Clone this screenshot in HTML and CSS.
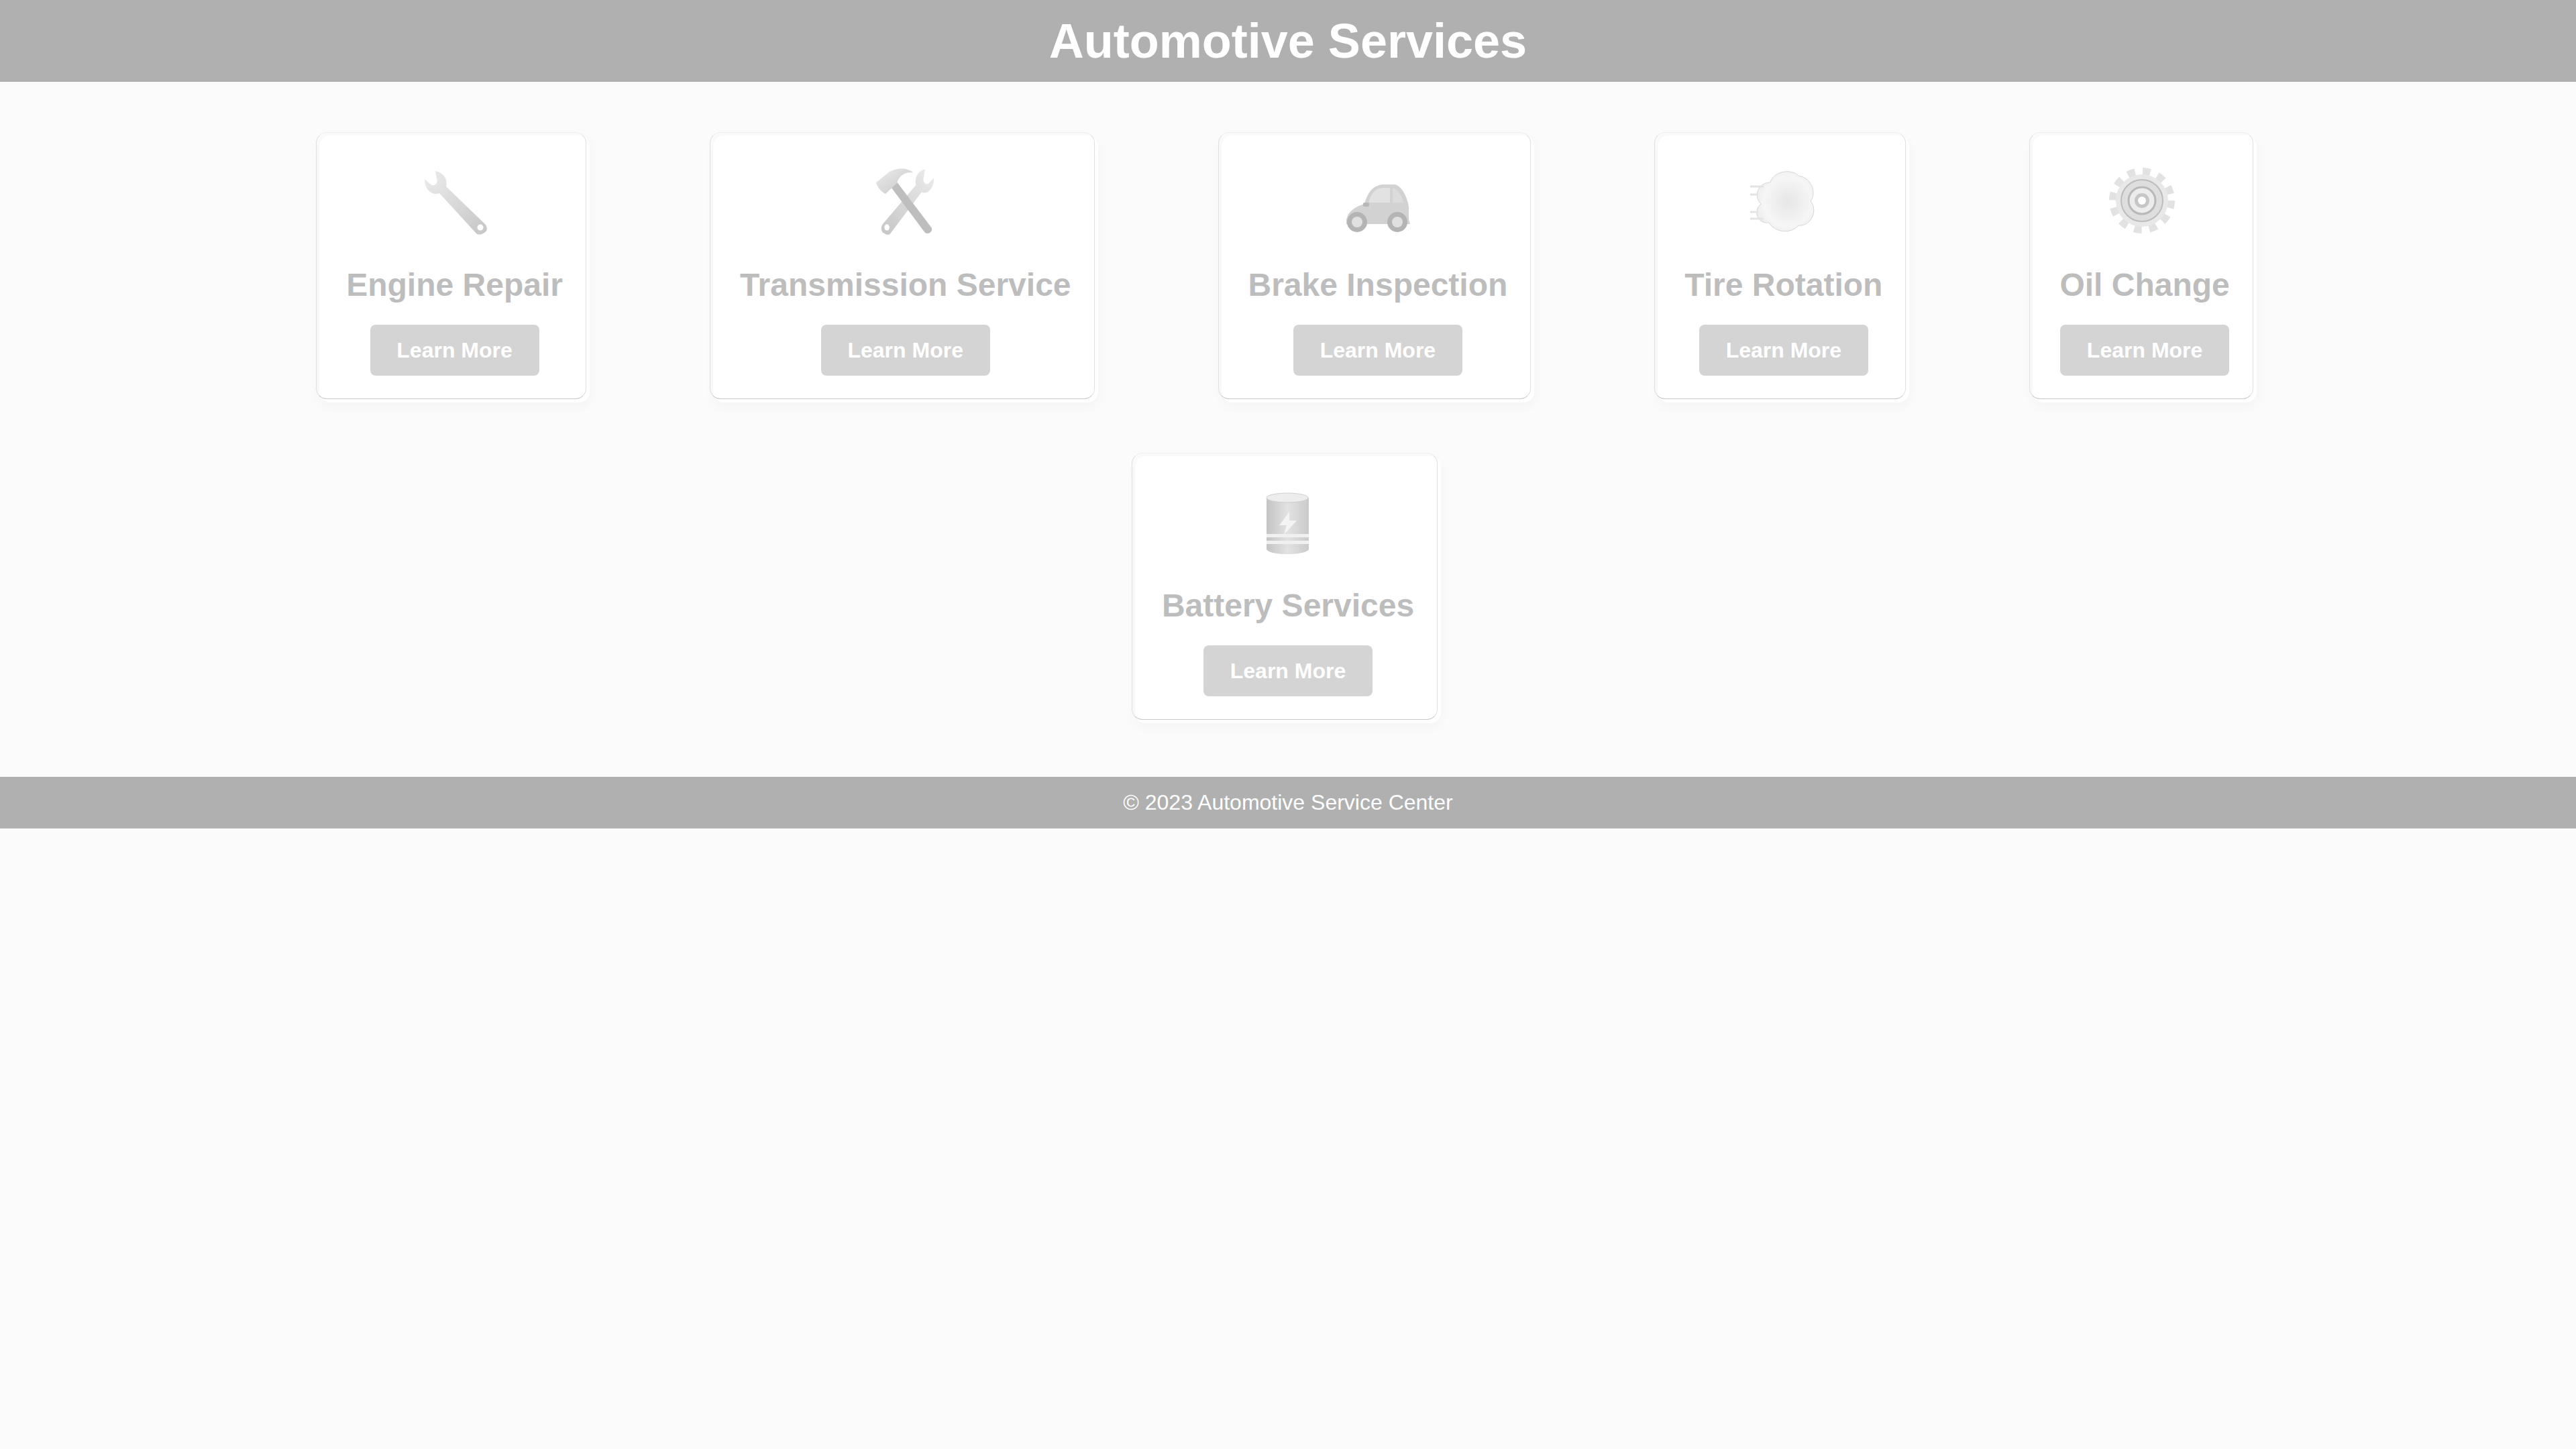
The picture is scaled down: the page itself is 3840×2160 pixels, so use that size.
FILE: index.html
```html
<html>
   <head>
      <title>Automotive Services</title>
      <link rel="stylesheet" href="styles.css">
   </head>
   <body>
      <svg class="defs" width="0" height="0">
         <defs>
            <linearGradient id="steel" x1="0" y1="0" x2="1" y2="1">
               <stop offset="0" stop-color="#ececec"/>
               <stop offset="1" stop-color="#c6c6c6"/>
            </linearGradient>
            <linearGradient id="can" x1="0" y1="0" x2="1" y2="0">
               <stop offset="0" stop-color="#c4c4c4"/>
               <stop offset="0.5" stop-color="#e2e2e2"/>
               <stop offset="1" stop-color="#cacaca"/>
            </linearGradient>
            <radialGradient id="puff" cx="0.55" cy="0.5" r="0.6">
               <stop offset="0" stop-color="#e6e6e6"/>
               <stop offset="0.7" stop-color="#f6f6f6"/>
               <stop offset="1" stop-color="#ececec"/>
            </radialGradient>
            <path id="spanner" d="M31 13C42 15 50 24 47 36L105 92C110 98 108 104 102 106C98 108 94 108 92 106L37 46C27 50 15 42 15 25L24 33C30 37 36 30 33 24Z"/>
         </defs>
      </svg>
      <header class="top">Automotive Services</header>
      <div class="services">
         <div class="card">
            <svg class="icon" viewBox="0 0 120 120">
               <use href="#spanner" fill="url(#steel)"/>
               <circle cx="98" cy="97" r="4.5" fill="#fff"/>
            </svg>
            <h2>Engine Repair</h2>
            <button>Learn More</button>
         </div>
         <div class="card">
            <svg class="icon" viewBox="0 0 120 120">
               <g transform="translate(115,-3) scale(-0.846,1.03)">
                  <use href="#spanner" fill="url(#steel)"/>
                  <circle cx="98" cy="97" r="4.5" fill="#fff"/>
               </g>
               <path d="M36 34L46 28L99 98C100 104 94 108 89 105Z" fill="#bebebe"/>
               <path d="M16 30L36 14C50 7 62 8 71 15C58 14 50 20 47 31L30 47C24 44 18 38 16 30Z" fill="url(#steel)"/>
            </svg>
            <h2>Transmission Service</h2>
            <button>Learn More</button>
         </div>
         <div class="card">
            <svg class="icon" viewBox="0 0 120 120">
               <path d="M13 92C12 78 20 68 40 62C44 46 52 35 66 33L86 33C96 36 104 52 106 66L106 85L108 92Z" fill="#d2d2d2"/>
               <path d="M46 60C50 46 56 39 66 38L78 38L78 60Z" fill="#e2e2e2"/>
               <path d="M82 38C90 40 96 50 98 60L82 60Z" fill="#dcdcdc"/>
               <rect x="38" y="60" width="9" height="6" rx="2" fill="#b8b8b8"/>
               <circle cx="29" cy="89" r="15" fill="#b4b4b4"/>
               <circle cx="29" cy="89" r="8" fill="#e0e0e0"/>
               <circle cx="89" cy="89" r="15" fill="#b4b4b4"/>
               <circle cx="89" cy="89" r="8" fill="#e0e0e0"/>
            </svg>
            <h2>Brake Inspection</h2>
            <button>Learn More</button>
         </div>
         <div class="card">
            <svg class="icon" viewBox="0 0 120 120">
               <path d="M40 30C44 14 70 8 82 20C100 22 110 44 100 58C112 72 100 96 82 94C70 108 46 104 38 90C20 92 14 72 26 62C14 50 22 30 40 30Z" fill="url(#puff)" stroke="#d6d6d6"/>
               <path d="M10 36H30M10 48H22M10 74H22M10 84H30" stroke="#e4e4e4" stroke-width="3" fill="none"/>
            </svg>
            <h2>Tire Rotation</h2>
            <button>Learn More</button>
         </div>
         <div class="card">
            <svg class="icon" viewBox="0 0 120 120">
               <circle cx="56" cy="57" r="43" fill="none" stroke="#e2e2e2" stroke-width="12" stroke-dasharray="11.3 11.3"/>
               <circle cx="56" cy="57" r="39" fill="#e8e8e8"/>
               <circle cx="56" cy="57" r="31" fill="#dedede" stroke="#bcbcbc" stroke-width="2"/>
               <circle cx="56" cy="57" r="20" fill="#ececec" stroke="#b8b8b8" stroke-width="3"/>
               <circle cx="56" cy="57" r="11" fill="#c6c6c6"/>
               <circle cx="56" cy="57" r="6" fill="#fff"/>
            </svg>
            <h2>Oil Change</h2>
            <button>Learn More</button>
         </div>
         <div class="card">
            <svg class="icon" viewBox="0 0 120 120">
               <path d="M28 22V98C28 103 42 106 59 106C76 106 91 103 91 98V22Z" fill="url(#can)"/>
               <ellipse cx="59" cy="22" rx="31" ry="7" fill="#ededed" stroke="#cfcfcf"/>
               <rect x="28" y="76" width="63" height="5" fill="#f0f0f0"/>
               <rect x="28" y="86" width="63" height="5" fill="#f0f0f0"/>
               <path d="M62 43L47 63H58L54 77L73 56H62Z" fill="#f4f4f4"/>
            </svg>
            <h2>Battery Services</h2>
            <button>Learn More</button>
         </div>
      </div>
      <footer class="bottom">© 2023 Automotive Service Center</footer>
   </body>
</html>
```

FILE: styles.css
```css
body {
   margin: 0;
   background: #fbfbfb;
   font-family: "Liberation Sans", Arial, sans-serif;
}
.defs {
   display: block;
   height: 0;
}
.top {
   background: #b0b0b0;
   color: #fff;
   text-align: center;
   font-size: 72px;
   font-weight: bold;
   line-height: 122px;
}
.services {
   display: flex;
   flex-wrap: wrap;
   justify-content: center;
   gap: 80px 184px;
   padding: 80px 0;
   width: 3000px;
   margin: 0 auto;
}
.card {
   position: relative;
   background: #fff;
   border-radius: 16px;
   box-shadow: 0 6px 20px rgba(0, 0, 0, 0.03);
   padding: 40px;
   text-align: center;
}
/* faint outline sitting just up and left of each card */
.card::before {
   content: "";
   position: absolute;
   top: -5px;
   left: -5px;
   right: 5px;
   bottom: 5px;
   border: 1px solid #e0e0e0;
   border-top-color: #eee;
   border-bottom-color: #c8c8c8;
   border-radius: 16px;
}
.icon {
   display: block;
   width: 120px;
   height: 120px;
   margin: 0 auto 35px;
}
h2 {
   margin: 0 0 32px;
   color: #bdbdbd;
   font-size: 48px;
   line-height: 55px;
   text-shadow: -5px -5px 0 rgba(0, 0, 0, 0.02);
}
button {
   background: #d4d4d4;
   color: #fff;
   border: 0;
   border-radius: 8px;
   width: 252px;
   height: 76px;
   font-family: inherit;
   font-size: 32px;
   font-weight: bold;
}
.bottom {
   background: #b0b0b0;
   color: #fff;
   text-align: center;
   font-size: 32px;
   line-height: 77px;
}
```
